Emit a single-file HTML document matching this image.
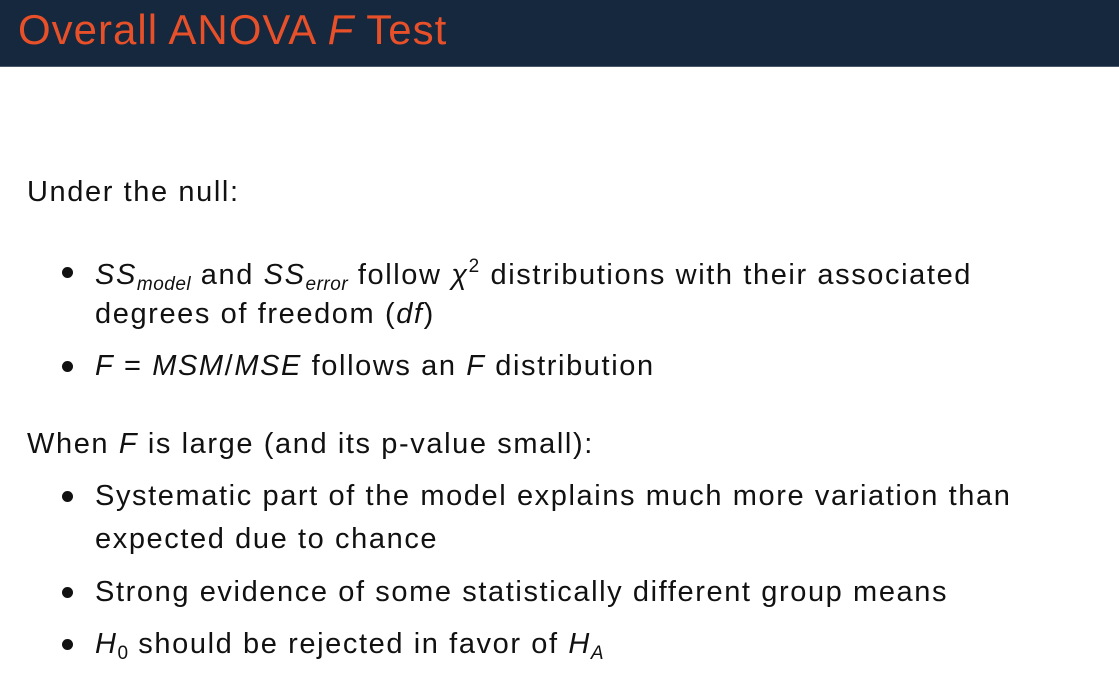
<!DOCTYPE html>
<html><head><meta charset="utf-8"><style>
body{margin:0;width:1119px;height:692px;background:#fff;overflow:hidden;font-family:"Liberation Sans",sans-serif;color:#111;position:relative}
.hd{position:absolute;left:0;top:0;width:1119px;height:66px;background:#15283d;border-bottom:1px solid #4a5a6a}
.t{position:absolute;left:18px;top:6px;font-size:42px;color:#e8502a;white-space:nowrap;letter-spacing:1px}
.l{position:absolute;font-size:29px;white-space:nowrap;line-height:1;letter-spacing:1.6px}
.b{position:absolute;width:11px;height:11px;border-radius:50%;background:#111}
i{font-style:italic}
sub{font-size:19px;vertical-align:-6px;font-style:italic;letter-spacing:0.5px}
sup{font-size:19px;vertical-align:12px}
</style></head><body>
<div class="hd"><div class="t">Overall ANOVA <i>F</i> Test</div></div>
<div class="l" style="left:27px;top:178px">Under the null:</div>
<div class="b" style="left:62px;top:267px"></div>
<div class="l" style="left:95px;top:257px"><i>SS</i><sub>model</sub> and <i>SS</i><sub>error</sub> follow <i>χ</i><sup>2</sup> distributions with their associated</div>
<div class="l" style="left:95px;top:300px">degrees of freedom (<i>df</i>)</div>
<div class="b" style="left:62px;top:361px"></div>
<div class="l" style="left:95px;top:352px"><i>F</i> = <i>MSM</i>/<i>MSE</i> follows an <i>F</i> distribution</div>
<div class="l" style="left:27px;top:430px">When <i>F</i> is large (and its p-value small):</div>
<div class="b" style="left:62px;top:491px"></div>
<div class="l" style="left:95px;top:482px">Systematic part of the model explains much more variation than</div>
<div class="l" style="left:95px;top:525px">expected due to chance</div>
<div class="b" style="left:62px;top:587px"></div>
<div class="l" style="left:95px;top:578px">Strong evidence of some statistically different group means</div>
<div class="b" style="left:62px;top:639px"></div>
<div class="l" style="left:95px;top:630px"><i>H</i><sub style="font-style:normal">0</sub> should be rejected in favor of <i>H</i><sub>A</sub></div>
</body></html>
